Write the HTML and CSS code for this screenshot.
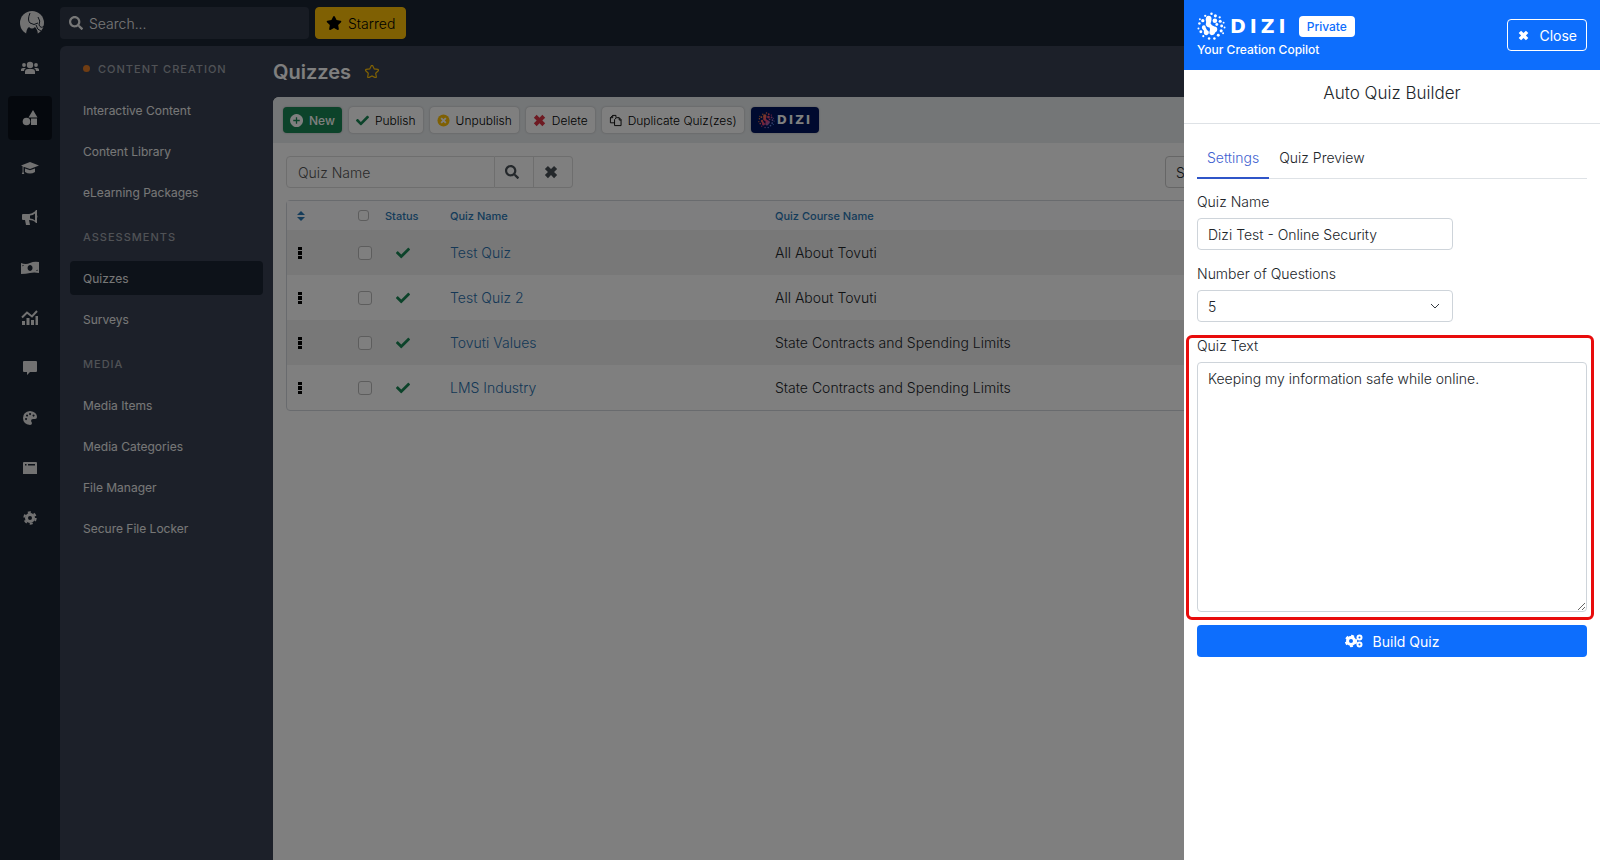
FILE: index.html
```html
<!DOCTYPE html>
<html lang="en">
<head>
    <meta charset="UTF-8">
    <meta name="viewport" content="width=device-width, initial-scale=1.0">
    <title>Quizzes</title>
    <link rel="stylesheet" href="styles.css">
</head>
<body>
    <!-- Shared icons -->
    <svg class="sprite" aria-hidden="true">
        <linearGradient id="globeColors" gradientUnits="userSpaceOnUse" x1="3" y1="5" x2="27" y2="25">
            <stop offset="0" stop-color="#ff9a2e"/>
            <stop offset="0.5" stop-color="#f0407a"/>
            <stop offset="1" stop-color="#2f9cff"/>
        </linearGradient>
        <symbol id="i-search" viewBox="0 0 512 512"><path d="M505 442.700L405.300 343c-4.500-4.500-10.600-7-17-7H372c27.600-35.300 44-79.700 44-128C416 93.100 322.900 0 208 0S0 93.100 0 208s93.100 208 208 208c48.300 0 92.700-16.400 128-44v16.300c0 6.400 2.500 12.500 7 17l99.700 99.700c9.400 9.400 24.600 9.400 33.900 0l28.300-28.300c9.400-9.400 9.400-24.600.1-34zM208 336c-70.700 0-128-57.200-128-128 0-70.700 57.200-128 128-128 70.700 0 128 57.200 128 128 0 70.700-57.200 128-128 128z"/></symbol>
        <symbol id="i-star" viewBox="0 0 576 512"><path d="M259.300 17.800L194 150.200 47.900 171.500c-26.200 3.800-36.700 36.100-17.700 54.600l105.700 103-25 145.500c-4.500 26.300 23.200 46 46.400 33.700L288 439.600l130.700 68.700c23.200 12.200 50.900-7.400 46.400-33.700l-25-145.500 105.700-103c19-18.500 8.500-50.800-17.700-54.600L382 150.200 316.700 17.800c-11.700-23.600-45.600-23.900-57.400 0z"/></symbol>
        <symbol id="i-check" viewBox="0 0 512 512"><path d="M173.900 439.400l-166.400-166.400c-10-10-10-26.200 0-36.200l36.200-36.200c10-10 26.200-10 36.200 0L192 312.700 432.100 72.600c10-10 26.200-10 36.200 0l36.200 36.200c10 10 10 26.200 0 36.200l-294.400 294.400c-10 10-26.200 10-36.200 0z"/></symbol>
        <symbol id="i-x" viewBox="0 0 16 16"><path d="M4.500 1L8 4.500 11.500 1 15 4.500 11.500 8 15 11.500 11.500 15 8 11.500 4.500 15 1 11.500 4.500 8 1 4.500z"/></symbol>
        <symbol id="i-dots" viewBox="0 0 4 12"><path d="M0 0h4v3H0zM0 4h4v4H0zM0 9h4v3H0z"/></symbol>
        <symbol id="i-globe" viewBox="0 0 30 30">
            <path d="M12 4q3 0 3 3 0 3-1 5 1 2 4 3 3 0 3 3 0 2-2 3-1 3-4 3-3-1-2-4 1-2 0-4-3 0-4-3 1-3 0-5 0-4 3-4z"/>
            <circle cx="18.500" cy="9" r="2.400"/><circle cx="20.500" cy="13" r="1.500"/>
            <path d="M6 14q3-1 3 2 1 3 3 4 1 3-2 4-3 0-3-3 1-2-1-3-2-2 0-4z"/>
            <circle cx="15" cy="1.800" r="1.300"/><circle cx="19" cy="4" r="1.600"/><circle cx="8.500" cy="4" r="1.200"/><circle cx="23.500" cy="5.500" r="1.200"/><circle cx="24" cy="9.500" r="1.600"/><circle cx="6" cy="9" r="1.700"/><circle cx="3" cy="7.500" r="1"/><circle cx="27.500" cy="11" r="1"/><circle cx="25.500" cy="14.500" r="1.500"/><circle cx="28.500" cy="16" r="1"/><circle cx="2.500" cy="12" r="1.300"/><circle cx="1.500" cy="17" r="1"/><circle cx="4" cy="20.500" r="1.500"/><circle cx="25" cy="19.500" r="1.600"/><circle cx="27" cy="22" r="1"/><circle cx="22" cy="24" r="1.500"/><circle cx="18" cy="27.500" r="1.300"/><circle cx="12.500" cy="27.500" r="1.300"/><circle cx="6.500" cy="25" r="1.100"/>
        </symbol>
    </svg>

    <div class="app">
        <nav class="rail" aria-label="Main">
            <a class="brand" href="#" aria-label="Home">
                <svg viewBox="0 0 26 26"><circle cx="13" cy="13" r="12"/><path class="cut" d="M7 26q0-7 3-9 3 3 6 0 3 3 3 9z"/><path class="line" d="M11 3q-3 7 0 10 4 3 8 0M19 7q3 4 1 8 2 4 5 1M17 15q1 5 5 6"/></svg>
            </a>
            <a href="#" aria-label="Users"><svg viewBox="0 0 18 14"><circle cx="9" cy="4" r="3.200"/><circle cx="3" cy="4" r="1.900"/><circle cx="15" cy="4" r="1.900"/><path d="M4 13v-2q0-3 3-3h4q3 0 3 3v2zM0 10V8.500Q0 7 2 7h3Q3 8 3 10zM18 10V8.500Q18 7 16 7h-3q2 1 2 3z"/></svg></a>
            <a class="active" href="#" aria-label="Content"><svg viewBox="0 0 18 16"><circle cx="5.500" cy="11.500" r="3.800"/><path d="M12 0l4.500 7.500h-9zM10 8.500h6V15h-6z"/></svg></a>
            <a href="#" aria-label="Courses"><svg viewBox="0 0 18 14"><path d="M9 1l9 3.500L9 8 2.500 5.800V11l.8 2H.8l.8-2V5.300L0 4.500zM4 7.500L9 9.300l5-1.800V11q-5 3-10 0z"/></svg></a>
            <a href="#" aria-label="Announcements"><svg viewBox="0 0 18 16"><path fill-rule="evenodd" d="M2 4h6q5-1 7-4h1v5q1 2 0 3v5h-1q-2-3-7-3l1 5H5L4 10H2q-1 0-1-1V5q0-1 1-1zM9 5.500v3q3 0 5 2v-7q-2 2-5 2z"/></svg></a>
            <a href="#" aria-label="Payments"><svg viewBox="0 0 18 14"><path fill-rule="evenodd" d="M0 2q5 2 9 0t9-1v11q-5-1-9 0t-9 1zM9 4a2.500 3 0 1 0 .1 0zM1.500 4v1.500L3 4zM16.500 10V8.500L15 10z"/></svg></a>
            <a href="#" aria-label="Reports"><svg viewBox="0 0 18 16"><path d="M1 11h3v4H1zM5.500 8h3v7h-3zM10 10h3v5h-3zM14.500 6H17v9h-2.500z"/><path class="stroke" d="M1 7.500l5-5 5 4L16 1"/></svg></a>
            <a href="#" aria-label="Messages"><svg viewBox="0 0 18 16"><path d="M3 1h12q1 0 1 1v9q0 1-1 1H9l-3 3v-3H3q-1 0-1-1V2q0-1 1-1z"/></svg></a>
            <a href="#" aria-label="Design"><svg viewBox="0 0 18 16"><path fill-rule="evenodd" d="M9 1q7 1 7 6 0 2-2 2h-2q-2 0-2 2l1 2q0 2-2 2-7-1-7-7t7-7zM5 8a1 1 0 1 0 .1 0zM6 4.500a1 1 0 1 0 .1 0zM9 3a1 1 0 1 0 .1 0zM12.500 4.500a1 1 0 1 0 .1 0z"/></svg></a>
            <a href="#" aria-label="Pages"><svg viewBox="0 0 18 16"><path fill-rule="evenodd" d="M3 2h12q1 0 1 1v11H2V3q0-1 1-1zM4 4v1.500h1.500V4zM7 4v1.500h7V4z"/></svg></a>
            <a href="#" aria-label="Configuration"><svg viewBox="0 0 18 16"><circle class="ring" cx="9" cy="8" r="3.500"/><circle class="teeth" cx="9" cy="8" r="5.700"/></svg></a>
        </nav>

        <div class="page">
            <header class="topbar">
                <div class="search">
                    <svg><use href="#i-search"/></svg>
                    <input type="text" placeholder="Search..." aria-label="Search">
                </div>
                <button class="starred" type="button"><svg><use href="#i-star"/></svg>Starred</button>
            </header>

            <div class="body">
                <aside class="sidebar">
                    <h2><span class="dot"></span>Content Creation</h2>
                    <a href="#">Interactive Content</a>
                    <a href="#">Content Library</a>
                    <a href="#">eLearning Packages</a>
                    <h2>Assessments</h2>
                    <a class="active" href="#">Quizzes</a>
                    <a href="#">Surveys</a>
                    <h2>Media</h2>
                    <a href="#">Media Items</a>
                    <a href="#">Media Categories</a>
                    <a href="#">File Manager</a>
                    <a href="#">Secure File Locker</a>
                </aside>

                <main>
                    <div class="title">
                        <h1>Quizzes</h1>
                        <svg class="fav"><use href="#i-star"/></svg>
                    </div>

                    <div class="card">
                        <div class="toolbar">
                            <button class="btn new" type="button"><svg viewBox="0 0 14 14"><path fill-rule="evenodd" d="M7 0a7 7 0 1 0 .1 0zM6.300 3.500h1.400v2.800h2.800v1.400H7.700v2.800H6.300V7.700H3.500V6.300h2.800z"/></svg>New</button>
                            <button class="btn" type="button"><svg class="green"><use href="#i-check"/></svg>Publish</button>
                            <button class="btn" type="button"><svg class="amber" viewBox="0 0 14 14"><circle cx="7" cy="7" r="6.500"/><path class="cross" d="M4.500 4.500l5 5M9.500 4.500l-5 5"/></svg>Unpublish</button>
                            <button class="btn" type="button"><svg class="red"><use href="#i-x"/></svg>Delete</button>
                            <button class="btn" type="button"><svg class="copy" viewBox="0 0 14 14"><path d="M6 9.500H1.500V4L4 1.500h3.500V4M1.500 4H4V1.500M6 12.500V6l2-2h3l2 2v6.500zM11 4v2.500h2"/></svg>Duplicate Quiz(zes)</button>
                            <button class="btn dizi" type="button"><svg><use href="#i-globe"/></svg><span class="wordmark">DIZI</span></button>
                        </div>

                        <div class="content">
                            <div class="filters">
                                <div class="group">
                                    <input type="text" placeholder="Quiz Name" aria-label="Quiz Name filter">
                                    <button type="button" aria-label="Search"><svg><use href="#i-search"/></svg></button>
                                    <button type="button" aria-label="Clear"><svg><use href="#i-x"/></svg></button>
                                </div>
                                <select aria-label="Status filter"><option>Select Status</option></select>
                            </div>

                            <table>
                                <colgroup><col class="c-sort"><col class="c-check"><col class="c-status"><col class="c-name"><col></colgroup>
                                <thead>
                                    <tr>
                                        <th><svg class="sort" viewBox="0 0 8 10"><path d="M4 0l4 4H0zM4 10l4-4H0z"/></svg></th>
                                        <th><input type="checkbox" aria-label="Select all"></th>
                                        <th>Status</th>
                                        <th>Quiz Name</th>
                                        <th>Quiz Course Name</th>
                                    </tr>
                                </thead>
                                <tbody>
                                    <tr>
                                        <td><svg class="dots"><use href="#i-dots"/></svg></td>
                                        <td><input type="checkbox" aria-label="Select Test Quiz"></td>
                                        <td><svg class="ok"><use href="#i-check"/></svg></td>
                                        <td><a href="#">Test Quiz</a></td>
                                        <td>All About Tovuti</td>
                                    </tr>
                                    <tr>
                                        <td><svg class="dots"><use href="#i-dots"/></svg></td>
                                        <td><input type="checkbox" aria-label="Select Test Quiz 2"></td>
                                        <td><svg class="ok"><use href="#i-check"/></svg></td>
                                        <td><a href="#">Test Quiz 2</a></td>
                                        <td>All About Tovuti</td>
                                    </tr>
                                    <tr>
                                        <td><svg class="dots"><use href="#i-dots"/></svg></td>
                                        <td><input type="checkbox" aria-label="Select Tovuti Values"></td>
                                        <td><svg class="ok"><use href="#i-check"/></svg></td>
                                        <td><a href="#">Tovuti Values</a></td>
                                        <td>State Contracts and Spending Limits</td>
                                    </tr>
                                    <tr>
                                        <td><svg class="dots"><use href="#i-dots"/></svg></td>
                                        <td><input type="checkbox" aria-label="Select LMS Industry"></td>
                                        <td><svg class="ok"><use href="#i-check"/></svg></td>
                                        <td><a href="#">LMS Industry</a></td>
                                        <td>State Contracts and Spending Limits</td>
                                    </tr>
                                </tbody>
                            </table>
                        </div>
                    </div>
                </main>
            </div>
        </div>
    </div>

    <div class="backdrop"></div>

    <section class="drawer" aria-label="Auto Quiz Builder">
        <header class="drawer-head">
            <div>
                <div class="logo">
                    <svg><use href="#i-globe"/></svg>
                    <span class="wordmark">DIZI</span>
                    <span class="badge">Private</span>
                </div>
                <p>Your Creation Copilot</p>
            </div>
            <button class="close" type="button"><svg><use href="#i-x"/></svg>Close</button>
        </header>
        <h2 class="drawer-title">Auto Quiz Builder</h2>

        <form class="drawer-body">
            <div class="tabs">
                <a class="active" href="#">Settings</a>
                <a href="#">Quiz Preview</a>
            </div>
            <div class="field">
                <label for="quizName">Quiz Name</label>
                <input type="text" id="quizName" value="Dizi Test - Online Security">
            </div>
            <div class="field">
                <label for="quizCount">Number of Questions</label>
                <div class="select">
                    <select id="quizCount"><option>5</option><option>10</option></select>
                    <svg viewBox="0 0 10 6"><path d="M1 1l4 4 4-4"/></svg>
                </div>
            </div>
            <div class="field highlight">
                <label for="quizText">Quiz Text</label>
                <textarea id="quizText">Keeping my information safe while online.</textarea>
            </div>
            <button class="build" type="button">
                <svg viewBox="0 0 18 14"><circle class="ring" cx="6" cy="7" r="3.500"/><circle class="teeth" cx="6" cy="7" r="5.200"/><circle class="small" cx="14.500" cy="3.500" r="2"/><circle class="small" cx="14.500" cy="10.500" r="2"/></svg>Build Quiz
            </button>
        </form>
    </section>
</body>
</html>
```

FILE: styles.css
```css
* { box-sizing: border-box; }
body { margin: 0; font-family: Inter, "Liberation Sans", sans-serif; font-size: 14px; font-weight: 300; color: #212529; background: #1b2432; }
input, select, textarea, button { font: inherit; color: inherit; }
a { text-decoration: none; color: inherit; }
h1, h2, p { margin: 0; }
svg { fill: currentColor; flex: none; display: block; }
.sprite { position: absolute; width: 0; height: 0; }
.wordmark { font-family: "DejaVu Sans", sans-serif; font-weight: bold; letter-spacing: 3px; }

/* Left icon rail */
.app { display: flex; min-height: 100vh; }
.rail { flex: none; width: 60px; display: flex; flex-direction: column; align-items: center; gap: 6px; color: #fff; }
.rail a { width: 44px; height: 44px; display: flex; align-items: center; justify-content: center; border-radius: 4px; }
.rail a.active { background: #0b111b; }
.rail svg { width: 18px; height: 16px; color: #e4e4e4; }
.rail .brand { height: 40px; }
.rail .brand svg { width: 26px; height: 26px; margin: 6px 0 0 4px; }
.rail .cut { fill: #1b2432; }
.rail .line { fill: none; stroke: #1b2432; }
.rail .stroke { fill: none; stroke: currentColor; stroke-width: 2px; }
.ring { fill: none; stroke: currentColor; stroke-width: 3px; }
.teeth { fill: none; stroke: currentColor; stroke-width: 2px; stroke-dasharray: 3 3; }

.page { flex: 1; min-width: 0; display: flex; flex-direction: column; }
.topbar { display: flex; gap: 6px; padding: 7px 0; }
.search { width: 249px; height: 32px; display: flex; align-items: center; gap: 6px; padding: 0 9px; border-radius: 4px; background: #303848; color: #eee; }
.search svg { width: 14px; height: 14px; }
.search input { flex: 1; min-width: 0; border: 0; padding: 0; background: none; }
.search input::placeholder { color: #eee; }
.starred { display: flex; align-items: center; gap: 6px; height: 32px; padding: 0 10px; border: 1px solid #ffc107; border-radius: 4px; background: #ffc107; color: #000; }
.starred svg { width: 16px; height: 14px; }

.body { flex: 1; display: flex; background: #384152; border-top-left-radius: 6px; }

/* Sidebar */
.sidebar { flex: none; width: 213px; padding: 2px 10px; color: #eee; font-size: 12px; font-weight: 400; }
.sidebar h2 { display: flex; align-items: center; height: 41px; margin-bottom: 4px; padding-left: 13px; font-size: 11px; font-weight: 500; letter-spacing: 1px; text-transform: uppercase; color: #a0a4ac; }
.sidebar a { display: flex; align-items: center; height: 34px; margin-bottom: 7px; padding-left: 13px; border-radius: 4px; }
.sidebar .active { background: #1b2432; }
.dot { width: 7px; height: 7px; margin-right: 8px; border-radius: 50%; background: #e07a26; }

main { flex: 1; min-width: 0; display: flex; flex-direction: column; }
.title { display: flex; align-items: center; gap: 14px; height: 51px; }
.title h1 { font-size: 20px; font-weight: 600; color: #fff; }
.fav { width: 14px; height: 13px; fill: none; stroke: #ffc107; stroke-width: 50px; overflow: visible; }

.card { flex: 1; background: #fff; border-top-left-radius: 6px; }
.toolbar { display: flex; gap: 7px; padding: 10px; background: #e8ecef; border-top-left-radius: 6px; }
.btn { display: flex; align-items: center; gap: 6px; height: 26px; padding: 0 7px; border: 0; border-radius: 4px; background: #fff; color: #000; font-size: 12px; box-shadow: 0 0 2px #aaa; }
.btn svg { width: 13px; height: 13px; }
.btn.new { background: #198754; color: #fff; font-weight: 500; }
.btn .green { color: #198754; }
.btn .amber { color: #ffc107; }
.btn .red { color: #dc3545; }
.btn .copy, .cross { fill: none; stroke: #000; }
.btn .cross { stroke: #fff; stroke-width: 2px; }
.btn.dizi { gap: 2px; background: #00145e; color: #fff; }
.btn.dizi svg { width: 17px; height: 17px; fill: url(#globeColors); }
.btn.dizi .wordmark { font-size: 12px; letter-spacing: 2px; }

.content { padding: 13px; }
.filters { display: flex; gap: 592px; margin-bottom: 12px; }
.group { display: flex; }
.group input { width: 209px; height: 32px; padding: 0 11px; border: 1px solid #ddd; border-radius: 4px 0 0 4px; background: #fff; }
.group input::placeholder { color: #555; }
.group button { width: 39px; display: flex; align-items: center; justify-content: center; padding: 0 4px 0 0; border: 1px solid #ddd; border-left: 0; background: #fff; color: #495057; }
.group button:last-child { border-radius: 0 4px 4px 0; }
.group svg { width: 14px; height: 14px; }
.filters > select { flex: 1; min-width: 0; height: 32px; padding: 0 10px; border: 1px solid #ccc; border-radius: 4px; background: #fff; appearance: none; }

table { width: 100%; table-layout: fixed; border-collapse: separate; border-spacing: 0; border: 1px solid #d3d7dd; border-radius: 4px; }
th, td { padding: 0; text-align: left; }
th { height: 29px; font-size: 11px; font-weight: 500; color: #2a78b5; background: #fcfcff; }
td { height: 45px; }
tbody tr:nth-child(odd) { background: #f1f1f1; }
td a { color: #2a70ad; }
.c-sort { width: 71px; }
.c-check { width: 27px; }
.c-status { width: 65px; }
.c-name { width: 325px; }
td:first-child, th:first-child { padding-left: 10px; }
.sort { width: 8px; height: 10px; }
.dots { width: 4px; height: 12px; margin-left: 1px; color: #000; }
.ok { width: 14px; height: 14px; margin-left: 11px; color: #198754; }
table input { appearance: none; display: block; width: 14px; height: 14px; margin: 0; border: 1px solid #bbb; border-radius: 3px; background: #fff; }
th input { width: 11px; height: 11px; }

.backdrop { position: fixed; inset: 0; background: rgba(0, 0, 0, 0.5); }

/* Quiz builder drawer */
.drawer { position: fixed; top: 0; right: 0; bottom: 0; width: 26%; min-width: 360px; background: #fff; overflow-y: auto; }
.drawer-head { display: flex; align-items: center; justify-content: space-between; height: 70px; padding: 0 13px; background: #0d6efd; color: #fff; }
.logo { display: flex; align-items: center; gap: 4px; height: 30px; }
.logo svg { width: 29px; height: 29px; }
.logo .wordmark { font-size: 19px; letter-spacing: 4px; }
.badge { margin-left: 5px; padding: 3px 8px; border-radius: 4px; background: #fff; color: #0d6efd; font-size: 12px; font-weight: 500; line-height: 15px; }
.drawer-head p { font-size: 12px; font-weight: 500; line-height: 18px; }
.close { display: flex; align-items: center; gap: 10px; height: 32px; padding: 0 9px 0 10px; border: 1px solid #fff; border-radius: 4px; background: none; font-weight: 400; }
.close svg { width: 11px; height: 11px; }
.drawer-title { height: 54px; padding-top: 13px; border-bottom: 1px solid #dee2e6; font-size: 17px; font-weight: 300; line-height: 20px; text-align: center; }
.drawer-body { padding: 15px 13px; }
.tabs { display: flex; margin-bottom: 12px; border-bottom: 1px solid #dee2e6; }
.tabs a { padding: 0 10px; line-height: 38px; }
.tabs .active { margin-bottom: -1px; border-bottom: 2px solid #2f55c8; color: #3f5fd0; }
.field { margin-bottom: 13px; }
.field label { display: block; margin-bottom: 6px; line-height: 21px; }
.field input, .field select { display: block; width: 100%; height: 32px; padding: 0 10px; border: 1px solid #ced4da; border-radius: 4px; background: #fff; }
.field input, .select { width: 256px; }
.select { position: relative; }
.select select { appearance: none; }
.select svg { position: absolute; right: 13px; top: 13px; width: 10px; height: 6px; fill: none; stroke: #343a40; }
.field textarea { display: block; width: 100%; height: 250px; padding: 5px 10px; border: 1px solid #ced4da; border-radius: 4px; line-height: 21px; resize: vertical; }
.highlight { position: relative; }
.highlight::after { content: ""; position: absolute; inset: 0 -7px -8px -11px; border: 3px solid #e80c0c; border-radius: 6px; pointer-events: none; }
.build { display: flex; align-items: center; justify-content: center; gap: 10px; width: 100%; height: 32px; border: 0; border-radius: 4px; background: #0d6efd; color: #fff; font-weight: 400; }
.build svg { width: 18px; height: 14px; }
.build .small { fill: none; stroke: currentColor; stroke-width: 2px; }
```
